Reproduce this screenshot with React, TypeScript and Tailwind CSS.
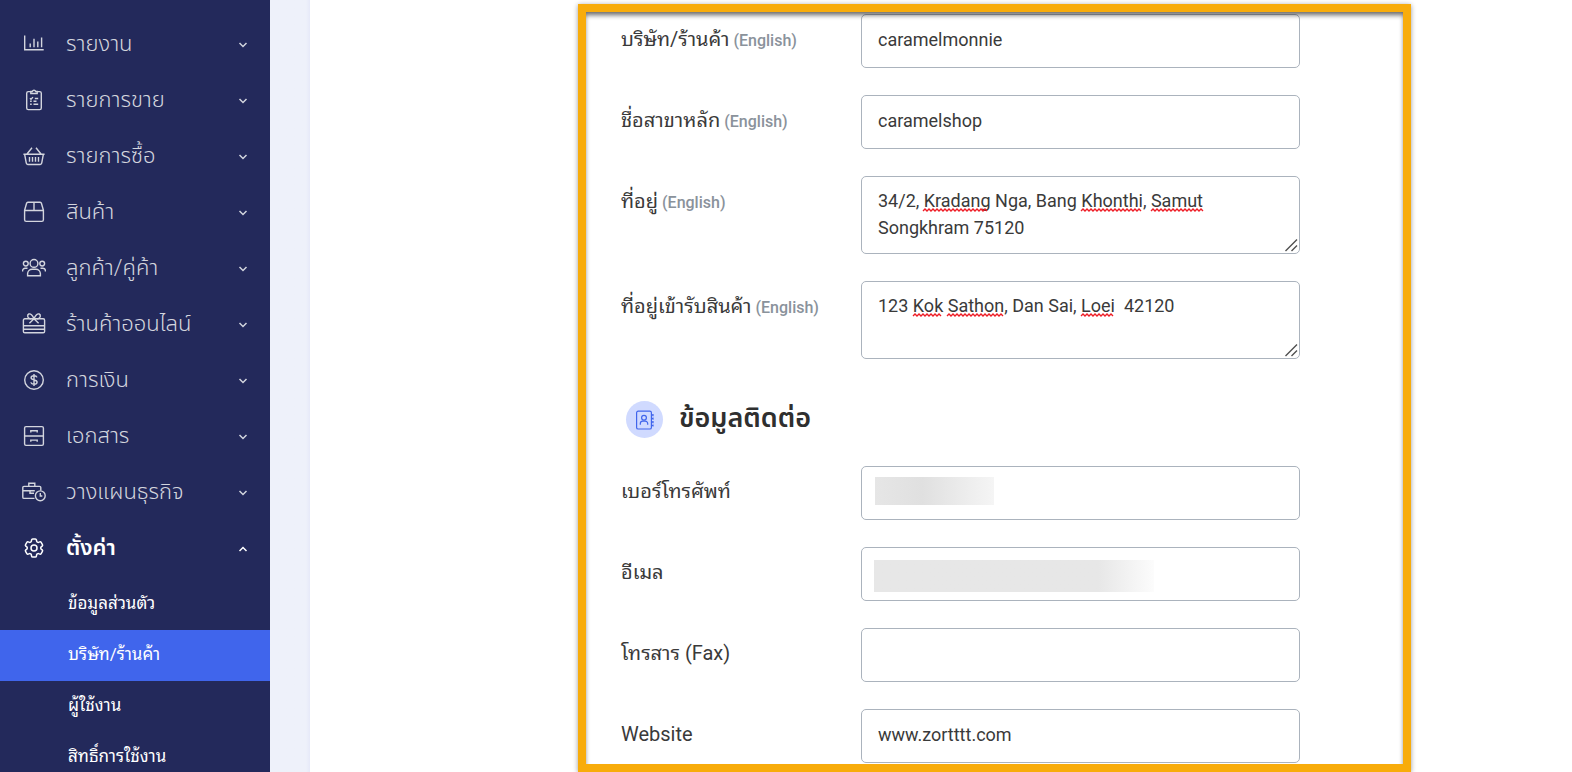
import type { ReactNode } from "react";
import clsx from "clsx";
import { HiOutlineCog6Tooth } from "react-icons/hi2";

type MenuItem = { label: string; icon: ReactNode; open?: boolean };
type Mark = { x: number; width: number };

const menu: MenuItem[] = [
  {
    label: "รายงาน",
    icon: <path d="M2.7 3.5v14.2h19M8.2 15.2v-3.7M12 15.2V6.8M15.8 15.2V9.5M19.6 15.2V5.5" />,
  },
  {
    label: "รายการขาย",
    icon: (
      <>
        <path d="M9 3.6H6.3a1.6 1.6 0 0 0-1.6 1.6V20a1.6 1.6 0 0 0 1.6 1.6h11.4a1.6 1.6 0 0 0 1.6-1.6V5.200a1.6 1.6 0 0 0-1.6-1.6H15" />
        <path d="M8.8 5.5v-2h1.500a1.8 1.8 0 0 1 3.400 0h1.500v2zM8 10.300l1 1 2-2.200M12.800 10.500h3.400M8.100 13.300h1.600M11.500 13.300h3M8.100 16.200h1.600M11.500 16.200h4.700" />
      </>
    ),
  },
  {
    label: "รายการซื้อ",
    icon: (
      <path d="M1.4 10.2h21.2M2.6 10.2l1.7 9a1.6 1.6 0 0 0 1.5 1.3h12.4a1.6 1.6 0 0 0 1.5-1.3l1.7-9M5 10l5-6.2M19 10l-5-6.2M7.5 13v4.8M10.5 13v4.8M13.5 13v4.8M16.5 13v4.8" />
    ),
  },
  {
    label: "สินค้า",
    icon: (
      <path d="M2.6 10.2l2-7a1.4 1.4 0 0 1 1.3-1h12.2a1.4 1.4 0 0 1 1.3 1l2 7v9.6a1.6 1.6 0 0 1-1.6 1.6H4.2a1.6 1.6 0 0 1-1.6-1.6zM2.6 10.5h18.8M12 2.2v8.3" />
    ),
  },
  {
    label: "ลูกค้า/คู่ค้า",
    icon: (
      <>
        <circle cx="12" cy="7.4" r="3.9" />
        <circle cx="3.8" cy="7.6" r="2.4" />
        <circle cx="20.2" cy="7.6" r="2.4" />
        <path d="M5.6 19.8v-2.2a4.6 4.6 0 0 1 4.6-4.4h3.6a4.6 4.6 0 0 1 4.6 4.4v2.2zM.6 15.6v-.8a2.5 2.5 0 0 1 2.5-2.5h2.4M23.4 15.6v-.8a2.5 2.5 0 0 0-2.5-2.5h-2.4" />
      </>
    ),
  },
  {
    label: "ร้านค้าออนไลน์",
    icon: (
      <>
        <path d="M9.5 6.8H2.8a1.4 1.4 0 0 0-1.4 1.4v11.2a1.4 1.4 0 0 0 1.4 1.4h18.4a1.4 1.4 0 0 0 1.4-1.4V8.2a1.4 1.4 0 0 0-1.4-1.4h-6.7M1.4 13.8h21.2M1.4 17.3h21.2" />
        <path d="M12 6.8C10.5 3 8.5 1.3 6.800 2c-2 .9-1.200 4.500 1.200 4.700 1.500.2 2.800.1 4 .1zM12 6.800c1.500-3.800 3.500-5.500 5.200-4.800 2 .9 1.200 4.500-1.200 4.700-1.500.2-2.800.1-4 .1zM12 6.800l-4.600 4.400M12 6.800l4.600 4.400" />
      </>
    ),
  },
  {
    label: "การเงิน",
    icon: (
      <>
        <circle cx="12" cy="12" r="9.3" />
        <path d="M15 9.4c-.4-1.2-1.5-1.7-3-1.7-1.6 0-2.9.7-2.9 2.1 0 3 6 1.3 6 4.3 0 1.5-1.4 2.2-3.1 2.2-1.6 0-2.8-.7-3.2-1.9M12 6v12" />
      </>
    ),
  },
  {
    label: "เอกสาร",
    icon: (
      <>
        <rect x="2.6" y="2.6" width="18.8" height="18.8" rx="1.4" />
        <path d="M2.6 12h18.8M8.8 8.4V6.7h6.4v1.7M8.8 17.8v-1.7h6.4v1.7" />
      </>
    ),
  },
  {
    label: "วางแผนธุรกิจ",
    icon: (
      <>
        <path d="M12.5 18.4H2a1.2 1.2 0 0 1-1.2-1.2V7.6A1.2 1.2 0 0 1 2 6.4h15.6a1.2 1.2 0 0 1 1.2 1.2v2.8M6.8 6.4V3.2h6v3.2M.8 10.8h12M8 10.8v2.4h4" />
        <circle cx="18.3" cy="15.8" r="4.9" />
        <path d="M18.3 13v3h2" />
      </>
    ),
  },
  { label: "ตั้งค่า", open: true, icon: <HiOutlineCog6Tooth size={24} /> },
];

const settings = ["ข้อมูลส่วนตัว", "บริษัท/ร้านค้า", "ผู้ใช้งาน", "สิทธิ์การใช้งาน"];
const activeSetting = "บริษัท/ร้านค้า";

export default function CompanySettings() {
  return (
    <div className="flex h-screen overflow-hidden bg-white font-['Roboto','Noto_Sans_Thai_Looped','Noto_Sans_Thai',sans-serif] text-[#3a3a3a]">
      <Sidebar />
      <div className="w-10 shrink-0 bg-linear-to-r from-[#eef1fa] from-90% to-[#e6e9f8]" />
      <main className="flex-1 pt-1 pr-[161px] pl-[268px]">
        <form className="relative flex flex-col gap-[27px] pt-[10px] pr-[111px] pb-[9px] pl-[43px]">
          <TextField id="company" label="บริษัท/ร้านค้า" english value="caramelmonnie" />
          <TextField id="branch" label="ชื่อสาขาหลัก" english value="caramelshop" />
          <AddressField
            id="address"
            label="ที่อยู่"
            value="34/2, Kradang Nga, Bang Khonthi, Samut Songkhram 75120"
            marks={[
              { x: 62, width: 67 },
              { x: 220, width: 61 },
              { x: 290, width: 52 },
            ]}
          />
          <AddressField
            id="pickup"
            label="ที่อยู่เข้ารับสินค้า"
            value="123 Kok Sathon, Dan Sai, Loei  42120"
            marks={[
              { x: 52, width: 30 },
              { x: 86, width: 57 },
              { x: 220, width: 34 },
            ]}
          />
          <h2 className="flex h-[53px] items-center gap-4 pt-[14px] pl-[5px] font-['Roboto','Noto_Sans_Thai',sans-serif] text-[27px] font-semibold text-[#2f2f2f]">
            <span className="flex size-[37px] items-center justify-center rounded-full bg-[#d0daff]">
              <ContactIcon />
            </span>
            <span className="pb-[3px]">ข้อมูลติดต่อ</span>
          </h2>
          <TextField id="phone" label="เบอร์โทรศัพท์">
            <span className="absolute top-[11px] left-[14px] h-7 w-[119px] bg-linear-to-r from-[#e6e6e6] via-[#e0e0e0] via-40% to-[#f5f5f5]" />
          </TextField>
          <TextField id="email" label="อีเมล">
            <span className="absolute top-[13px] left-[13px] h-8 w-[280px] bg-linear-to-r from-[#e7e7e7] from-80% to-[#fcfcfc]" />
          </TextField>
          <TextField id="fax" label="โทรสาร (Fax)" />
          <TextField id="website" label="Website" value="www.zortttt.com" />
          <div className="pointer-events-none absolute inset-0 border-8 border-[#f8ac0b] shadow-[0_1px_5px_rgba(0,0,0,0.4),inset_0_4px_5px_-1px_rgba(0,0,0,0.6)]" />
        </form>
      </main>
    </div>
  );
}

function Sidebar() {
  return (
    <nav className="w-[270px] shrink-0 bg-[#23295b] pt-4">
      {menu.map((item) => (
        <button
          key={item.label}
          type="button"
          aria-expanded={!!item.open}
          className={clsx(
            "flex h-14 w-full items-center gap-5 px-[22px] font-['Roboto','Noto_Sans_Thai',sans-serif] text-[22px]",
            item.open ? "font-semibold text-white" : "font-light text-[#d3d5de]"
          )}
        >
          <svg
            viewBox="0 0 24 24"
            className="size-6"
            fill="none"
            stroke="currentColor"
            strokeWidth="1.4"
          >
            {item.icon}
          </svg>
          <span className="pb-[2px]">{item.label}</span>
          <svg
            viewBox="0 0 10 10"
            className="ml-auto size-[10px]"
            fill="none"
            stroke="currentColor"
            strokeWidth="1.5"
          >
            <path d={item.open ? "M1.5 8 5 4.5 8.5 8" : "M1.5 4 5 7.5 8.5 4"} />
          </svg>
        </button>
      ))}
      <div className="pt-[3px] text-[17px] text-white">
        {settings.map((label) => (
          <a
            key={label}
            href="#"
            className={clsx(
              "flex h-[51px] items-center pb-[2px] pl-[68px]",
              label === activeSetting && "bg-[#4065ec]"
            )}
          >
            {label}
          </a>
        ))}
      </div>
    </nav>
  );
}

function FieldLabel({ id, label, english }: { id: string; label: string; english?: boolean }) {
  return (
    <label
      htmlFor={id}
      className="flex w-60 shrink-0 items-baseline gap-1 pt-[11px] text-[20px] leading-7 whitespace-nowrap"
    >
      {label}
      {english && <span className="text-base font-medium text-[#8a929b]">(English)</span>}
    </label>
  );
}

function TextField({
  id,
  label,
  english,
  value,
  children,
}: {
  id: string;
  label: string;
  english?: boolean;
  value?: string;
  children?: ReactNode;
}) {
  return (
    <div className="flex items-start">
      <FieldLabel id={id} label={label} english={english} />
      <div className="relative flex-1">
        <input
          id={id}
          type="text"
          defaultValue={value}
          className="block h-[54px] w-full rounded-[5px] border border-[#abb3bd] bg-white px-4 pb-[3px] text-[18px] outline-none"
        />
        {children}
      </div>
    </div>
  );
}

function AddressField({
  id,
  label,
  value,
  marks,
}: {
  id: string;
  label: string;
  value: string;
  marks: Mark[];
}) {
  return (
    <div className="flex items-start">
      <FieldLabel id={id} label={label} english />
      <div className="relative flex-1">
        <textarea
          id={id}
          spellCheck={false}
          defaultValue={value}
          className="block h-[78px] w-full rounded-[5px] border border-[#abb3bd] bg-white px-4 py-[10px] text-[18px] leading-[27px] outline-none"
        />
        <SpellingMarks marks={marks} />
        <svg
          viewBox="0 0 14 14"
          className="pointer-events-none absolute right-[2px] bottom-[2px] size-[14px] bg-white"
          fill="none"
          stroke="#505050"
          strokeWidth="1.4"
        >
          <path d="M1.5 13 13 1.5M7.5 13 13 7.5" />
        </svg>
      </div>
    </div>
  );
}

function SpellingMarks({ marks }: { marks: Mark[] }) {
  return (
    <svg
      className="pointer-events-none absolute top-[32px] left-0 h-1 w-full"
      fill="none"
      stroke="#ee1c25"
      strokeWidth="1.4"
    >
      {marks.map(({ x, width }) => (
        <path key={x} d={`M${x} 3${"l2-2 2 2".repeat(Math.floor(width / 4))}`} />
      ))}
    </svg>
  );
}

function ContactIcon() {
  return (
    <svg viewBox="0 0 20 20" className="size-5" fill="none" stroke="#4065ec" strokeWidth="1.2">
      <rect x="1.6" y="1.2" width="14.8" height="17.8" rx="1.6" />
      <path d="M18 4v2.2M18 7.5v2.2M18 11v2.2M18 14.5v2M16.5 5H18M16.5 8.5H18M16.5 12H18M16.5 15.5H18" />
      <circle cx="9" cy="7.8" r="2.4" />
      <path d="M5.3 14.8v-1.2a2.4 2.4 0 0 1 2.4-2.4h2.6a2.4 2.4 0 0 1 2.4 2.4v1.2" />
    </svg>
  );
}
